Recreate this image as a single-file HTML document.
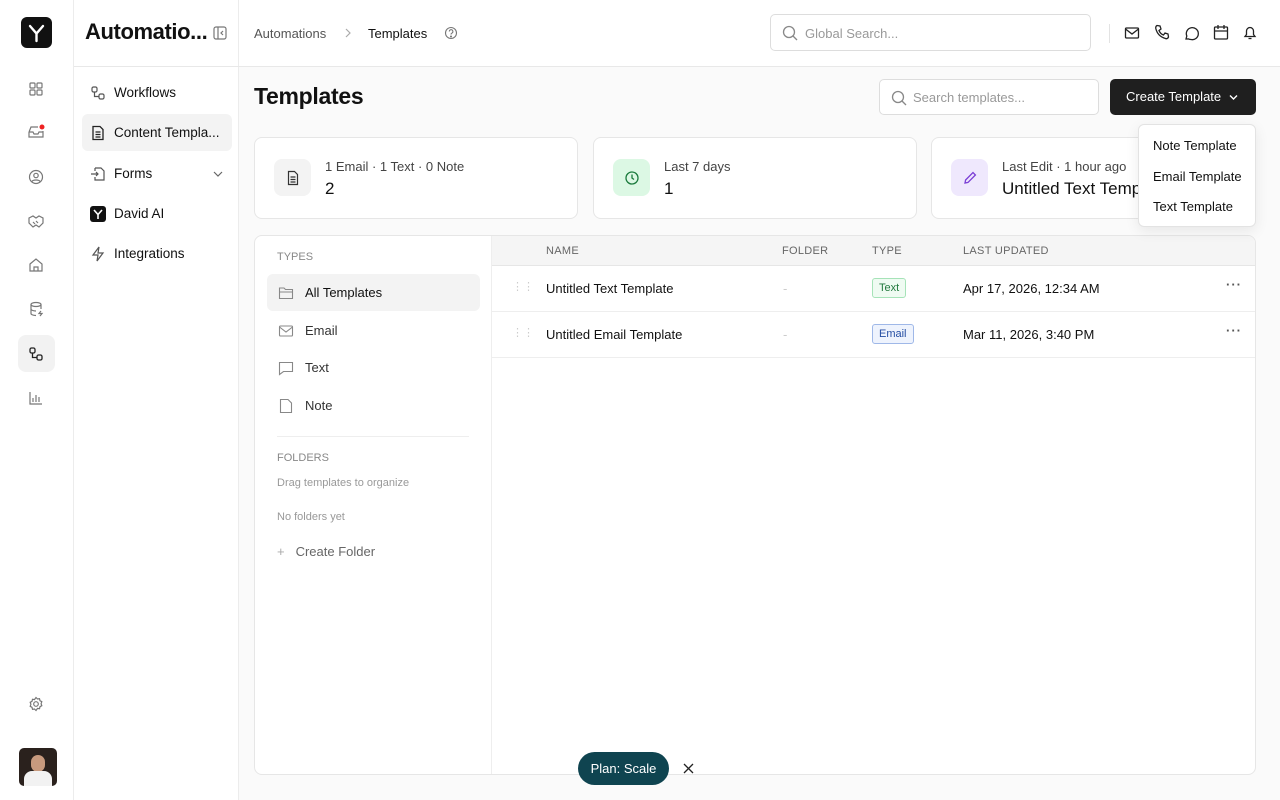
<!DOCTYPE html>
<html><head><meta charset="utf-8"><style>
*{box-sizing:border-box;margin:0;padding:0}
body{width:1280px;height:800px;overflow:hidden;font-family:"Liberation Sans",sans-serif;background:#fafafa;color:#111;position:relative;font-size:13px}
.abs{position:absolute}
svg{display:block}
.rail{left:0;top:0;width:74px;height:800px;background:#fff;border-right:1px solid #ececec}
.sub{left:74px;top:0;width:165px;height:800px;background:#fff;border-right:1px solid #ececec}
.hdr{left:239px;top:0;width:1041px;height:67px;background:#fff;border-bottom:1px solid #e8e8e8}
.ri{position:absolute;left:27px;width:18px;height:18px}
.nav{position:absolute;left:8px;width:150px;height:37px;display:flex;align-items:center;padding-left:8px;font-size:13.5px;gap:8px}
.card{position:absolute;top:137px;height:82px;background:#fff;border:1px solid #e6e6e6;border-radius:8px}
.ic{position:absolute;left:19px;top:21px;width:37px;height:37px;border-radius:8px;display:flex;align-items:center;justify-content:center}
.cl{position:absolute;left:70px;top:21px;font-size:13px;color:#444}
.cv{position:absolute;left:70px;top:41px;font-size:17px;color:#111}
.ty{position:absolute;left:12px;width:213px;height:37px;display:flex;align-items:center;padding-left:11px;gap:11px;font-size:13px;color:#333;border-radius:6px}
.th{position:absolute;top:14px;font-size:11px;color:#666;letter-spacing:.3px}
.row{position:absolute;left:0;width:764px;height:46px;border-bottom:1px solid #eee;font-size:13px}
.row span{position:absolute;top:15px}
</style></head><body>
<div class="abs rail">
 <div class="abs" style="left:21px;top:17px;width:31px;height:31px;background:#111;border-radius:6px"><svg width="31" height="31"><path d="M9 9l6.5 7.5L22 9M15.5 16.5V24" stroke="#fff" stroke-width="2.4" fill="none" stroke-linecap="round"/></svg></div>
 <svg class="ri" style="top:80px" viewBox="0 0 18 18" fill="none" stroke="#777" stroke-width="1.2"><rect x="3" y="3" width="5" height="5" rx="1"/><rect x="10" y="3" width="5" height="5" rx="1"/><rect x="3" y="10" width="5" height="5" rx="1"/><rect x="10" y="10" width="5" height="5" rx="1"/></svg>
 <svg class="ri" style="top:123px" viewBox="0 0 18 18" fill="none" stroke="#777" stroke-width="1.2"><path d="M2 9l2-5h7M2 9v5h14V8M2 9h4l1 2h4l1-2h4"/><circle cx="15" cy="4" r="2.5" fill="#e22" stroke="none"/></svg>
 <svg class="ri" style="top:168px" viewBox="0 0 18 18" fill="none" stroke="#777" stroke-width="1.2"><circle cx="9" cy="9" r="6.5"/><circle cx="9" cy="7.5" r="2.2"/><path d="M5 13.5c1-2 7-2 8 0"/></svg>
 <svg class="ri" style="top:212px" viewBox="0 0 18 18" fill="none" stroke="#777" stroke-width="1.2"><path d="M2 6l4-2 3 2 3-2 4 2v5l-4 4-3-2-3 2-4-4z"/><path d="M6 10l2 2M9 9l2 2"/></svg>
 <svg class="ri" style="top:256px" viewBox="0 0 18 18" fill="none" stroke="#777" stroke-width="1.2"><path d="M3 8l6-5 6 5v7H3z"/><path d="M7 15v-4h4v4"/></svg>
 <svg class="ri" style="top:300px" viewBox="0 0 18 18" fill="none" stroke="#777" stroke-width="1.2"><ellipse cx="9" cy="4.5" rx="5" ry="2"/><path d="M4 4.5v9c0 1 2 2 5 2M14 4.5V9M4 9c0 1 2 2 5 2"/><path d="M14 11l-2 2.5h3L13 16"/></svg>
 <div class="abs" style="left:18px;top:335px;width:37px;height:37px;background:#f2f2f2;border-radius:8px"></div>
 <svg class="ri" style="top:345px" viewBox="0 0 18 18" fill="none" stroke="#222" stroke-width="1.3"><rect x="3" y="3" width="5" height="5" rx="1.5"/><rect x="10" y="10" width="5" height="5" rx="1.5"/><path d="M5.5 8v4.5H10"/></svg>
 <svg class="ri" style="top:389px" viewBox="0 0 18 18" fill="none" stroke="#777" stroke-width="1.2"><path d="M3 3v12h12M6 13V9M9 13V6M12 13V8"/></svg>
 <svg class="ri" style="top:695px" viewBox="0 0 18 18" fill="none" stroke="#777" stroke-width="1.2"><circle cx="9" cy="9" r="2.3"/><path d="M9 2.5l1.5 1.5 2-.3.5 2 1.8 1-.7 2 .7 2-1.8 1-.5 2-2-.3L9 15.5 7.5 14l-2 .3-.5-2-1.8-1 .7-2-.7-2 1.8-1 .5-2 2 .3z"/></svg>
 <div class="abs" style="left:19px;top:748px;width:38px;height:38px;border-radius:5px;overflow:hidden;background:#2a211d"><div class="abs" style="left:12px;top:7px;width:14px;height:17px;border-radius:7px;background:#c89a7e"></div><div class="abs" style="left:5px;top:23px;width:28px;height:16px;border-radius:8px 8px 0 0;background:#f2f2f2"></div></div>
</div>
<div class="abs sub">
 <div class="abs" style="left:11px;top:19px;font-size:22px;font-weight:bold;letter-spacing:-.4px">Automatio...</div>
 <svg class="abs" style="left:139px;top:26px" width="14" height="14" fill="none" stroke="#777" stroke-width="1.2"><rect x="1" y="1" width="12" height="12" rx="2"/><path d="M5 1v12M10 5l-2 2 2 2"/></svg>
 <div class="abs" style="left:0;top:66px;width:165px;border-top:1px solid #e8e8e8"></div>
 <div class="nav" style="top:74px"><svg width="16" height="16" fill="none" stroke="#555" stroke-width="1.2"><rect x="2" y="2" width="5" height="5" rx="1.5"/><rect x="9" y="9" width="5" height="5" rx="1.5"/><path d="M4.5 7v4.5H9"/></svg>Workflows</div>
 <div class="nav" style="top:114px;background:#f3f3f3;border-radius:6px"><svg width="16" height="16" fill="none" stroke="#222" stroke-width="1.3"><path d="M3 1.5h7l3 3v10H3z"/><path d="M5.5 7h5M5.5 9.5h5M5.5 12h5"/></svg>Content Templa...</div>
 <div class="nav" style="top:155px"><svg width="16" height="16" fill="none" stroke="#555" stroke-width="1.2"><path d="M5 2h6l3 3v9H5v-3M5 5V2"/><path d="M1 8h7M6 6l2 2-2 2"/></svg>Forms<svg style="margin-left:auto;margin-right:8px" width="12" height="12" fill="none" stroke="#666" stroke-width="1.2"><path d="M2 4l4 4 4-4"/></svg></div>
 <div class="nav" style="top:195px"><div style="width:16px;height:16px;background:#111;border-radius:3px"><svg width="16" height="16"><path d="M4 4l4 4.5L12 4M8 8.5V13" stroke="#fff" stroke-width="1.6" fill="none"/></svg></div>David AI</div>
 <div class="nav" style="top:235px"><svg width="16" height="16" fill="none" stroke="#555" stroke-width="1.2"><path d="M9 1L3 9h5l-1 6 6-8H8z"/></svg>Integrations</div>
</div>
<div class="abs hdr">
 <div class="abs" style="left:15px;top:26px;font-size:13px;color:#555">Automations</div>
 <svg class="abs" style="left:104px;top:28px" width="10" height="10" fill="none" stroke="#aaa" stroke-width="1.2"><path d="M3 1l4 4-4 4"/></svg>
 <div class="abs" style="left:129px;top:26px;font-size:13px;color:#111">Templates</div>
 <svg class="abs" style="left:205px;top:26px" width="14" height="14" fill="none" stroke="#777" stroke-width="1.1"><circle cx="7" cy="7" r="5.5"/><path d="M5.3 5.5a1.8 1.8 0 113 1.3c-.8.5-1.3.8-1.3 1.7"/><circle cx="7" cy="10.5" r=".5" fill="#777"/></svg>
 <div class="abs" style="left:531px;top:14px;width:321px;height:37px;border:1px solid #ddd;border-radius:5px">
  <svg class="abs" style="left:11px;top:10px" width="16" height="16" fill="none" stroke="#888" stroke-width="1.3"><circle cx="7" cy="7" r="5.5"/><path d="M11 11l4 4"/></svg>
  <div class="abs" style="left:34px;top:11px;font-size:13px;color:#999">Global Search...</div>
 </div>
 <div class="abs" style="left:870px;top:24px;height:19px;border-left:1px solid #e3e3e3"></div>
 <svg class="abs" style="left:885px;top:25px" width="16" height="16" fill="none" stroke="#222" stroke-width="1.3"><rect x="1.5" y="3" width="13" height="10" rx="1"/><path d="M1.5 4l6.5 5 6.5-5"/></svg>
 <svg class="abs" style="left:915px;top:24px" width="16" height="17" fill="none" stroke="#222" stroke-width="1.3"><path d="M3 1.5l3 .5 1 3-2 1.5c.8 2 2.5 3.8 4.5 4.5L11 9l3 1 .5 3c-.5 1.5-2 2-3 1.5C6 13 3 9.5 1.8 4.5 1.6 3 2 2 3 1.5z"/></svg>
 <svg class="abs" style="left:944px;top:25px" width="16" height="16" fill="none" stroke="#222" stroke-width="1.3"><path d="M3 14l.8-3A6 6 0 118 14.5a6 6 0 01-2.5-.6z"/></svg>
 <svg class="abs" style="left:974px;top:24px" width="16" height="17" fill="none" stroke="#222" stroke-width="1.3"><rect x="1.5" y="3" width="13" height="12" rx="1"/><path d="M1.5 7h13M5 1v4M11 1v4"/></svg>
 <svg class="abs" style="left:1003px;top:24px" width="16" height="17" fill="none" stroke="#222" stroke-width="1.3"><path d="M3 12.5h10l-1.5-2V7a3.5 3.5 0 00-7 0v3.5z"/><path d="M6.5 14.5h3"/></svg>
</div>
<div class="abs" style="left:254px;top:83px;font-size:23px;font-weight:bold;letter-spacing:-.3px">Templates</div>
<div class="abs" style="left:879px;top:79px;width:220px;height:36px;border:1px solid #ddd;border-radius:5px;background:#fff">
 <svg class="abs" style="left:11px;top:10px" width="16" height="16" fill="none" stroke="#888" stroke-width="1.3"><circle cx="7" cy="7" r="5.5"/><path d="M11 11l4 4"/></svg>
 <div class="abs" style="left:33px;top:10px;font-size:13px;color:#999">Search templates...</div>
</div>
<div class="abs" style="left:1110px;top:79px;width:146px;height:36px;background:#1f1f1f;border-radius:5px;color:#fff;font-size:13px;padding:10px 0 0 16px">Create Template<svg class="abs" style="left:118px;top:13px" width="11" height="11" fill="none" stroke="#fff" stroke-width="1.4"><path d="M2 3.5l3.5 3.5L9 3.5"/></svg></div>
<div class="card" style="left:254px;width:324px"><div class="ic" style="background:#f3f3f3"><svg width="16" height="16" fill="none" stroke="#333" stroke-width="1.2"><path d="M3.5 1.5h6l3 3v10h-9z"/><path d="M5.5 7h5M5.5 9.5h5M5.5 12h5"/></svg></div><div class="cl">1 Email · 1 Text · 0 Note</div><div class="cv">2</div></div>
<div class="card" style="left:593px;width:324px"><div class="ic" style="background:#dcf8e4"><svg width="16" height="16" fill="none" stroke="#1a7a3c" stroke-width="1.3"><circle cx="8" cy="8" r="6"/><path d="M8 4.5V8l2 1.5"/></svg></div><div class="cl">Last 7 days</div><div class="cv">1</div></div>
<div class="card" style="left:931px;width:324px;overflow:hidden"><div class="ic" style="background:#efe8fd"><svg width="16" height="16" fill="none" stroke="#7b3fd6" stroke-width="1.3"><path d="M3 13l.6-3L11 2.6l2.4 2.4L6 12.4z"/></svg></div><div class="cl">Last Edit · 1 hour ago</div><div class="cv">Untitled Text Template</div></div>
<div class="abs" style="left:254px;top:235px;width:1002px;height:540px;background:#fff;border:1px solid #e6e6e6;border-radius:8px;overflow:hidden">
 <div class="abs" style="left:22px;top:15px;font-size:11px;color:#888">TYPES</div>
 <div class="ty" style="top:38px;background:#f3f3f3"><svg width="16" height="16" fill="none" stroke="#888" stroke-width="1.1"><path d="M1.5 3h4.5l1.5 1.5h7v9h-13zM1.5 7h13"/></svg><span style="color:#111">All Templates</span></div>
 <div class="ty" style="top:76px"><svg width="16" height="16" fill="none" stroke="#888" stroke-width="1.1"><rect x="1.5" y="3" width="13" height="10" rx="1"/><path d="M1.5 4l6.5 5 6.5-5"/></svg>Email</div>
 <div class="ty" style="top:113px"><svg width="16" height="16" fill="none" stroke="#888" stroke-width="1.1"><path d="M1.5 2.5h13v9h-9l-4 3z"/></svg>Text</div>
 <div class="ty" style="top:151px"><svg width="16" height="16" fill="none" stroke="#888" stroke-width="1.1"><path d="M2.5 1.5h7.5l3.5 3.5v9.5h-11z"/></svg>Note</div>
 <div class="abs" style="left:22px;top:200px;width:192px;border-top:1px solid #eee"></div>
 <div class="abs" style="left:22px;top:216px;font-size:11px;color:#888">FOLDERS</div>
 <div class="abs" style="left:22px;top:241px;font-size:11px;color:#999">Drag templates to organize</div>
 <div class="abs" style="left:22px;top:275px;font-size:11px;color:#999">No folders yet</div>
 <div class="abs" style="left:22px;top:308px;font-size:13px;color:#666"><span style="color:#aaa;margin-right:11px">+</span>Create Folder</div>
 <div class="abs" style="left:236px;top:0;width:765px;height:540px;border-left:1px solid #eee">
  <div class="abs" style="left:0;top:0;width:765px;height:30px;background:#f5f5f5;border-bottom:1px solid #e6e6e6">
   <div class="th" style="left:54px;top:9px">NAME</div><div class="th" style="left:290px;top:9px">FOLDER</div><div class="th" style="left:380px;top:9px">TYPE</div><div class="th" style="left:471px;top:9px">LAST UPDATED</div>
  </div>
  <div class="row" style="top:30px"><span style="left:20px;color:#ccc;font-size:11px;top:14px">⋮⋮</span><span style="left:54px">Untitled Text Template</span><span style="left:291px;color:#ccc">-</span><span style="left:380px;top:12px;font-size:11px;color:#237a3f;background:#effbf2;border:1px solid #a6e3b8;border-radius:3px;padding:3px 6px">Text</span><span style="left:471px">Apr 17, 2026, 12:34 AM</span><span style="left:734px;top:11px;color:#555;font-weight:bold;letter-spacing:1px">···</span></div>
  <div class="row" style="top:76px"><span style="left:20px;color:#ccc;font-size:11px;top:14px">⋮⋮</span><span style="left:54px">Untitled Email Template</span><span style="left:291px;color:#ccc">-</span><span style="left:380px;top:12px;font-size:11px;color:#254ea3;background:#eef3fd;border:1px solid #9fb8e8;border-radius:3px;padding:3px 6px">Email</span><span style="left:471px">Mar 11, 2026, 3:40 PM</span><span style="left:734px;top:11px;color:#555;font-weight:bold;letter-spacing:1px">···</span></div>
 </div>
</div>
<div class="abs" style="left:1138px;top:124px;width:118px;height:103px;background:#fff;border:1px solid #e3e3e3;border-radius:6px;box-shadow:0 4px 14px rgba(0,0,0,.08);font-size:13px">
 <div class="abs" style="left:14px;top:13px">Note Template</div>
 <div class="abs" style="left:14px;top:44px">Email Template</div>
 <div class="abs" style="left:14px;top:74px">Text Template</div>
</div>
<div class="abs" style="left:578px;top:752px;width:91px;height:33px;background:#0f4450;border-radius:17px;color:#fff;font-size:13px;text-align:center;line-height:33px">Plan: Scale</div>
<svg class="abs" style="left:683px;top:763px" width="11" height="11" stroke="#222" stroke-width="1.3"><path d="M1 1l9 9M10 1l-9 9"/></svg>
</body></html>
